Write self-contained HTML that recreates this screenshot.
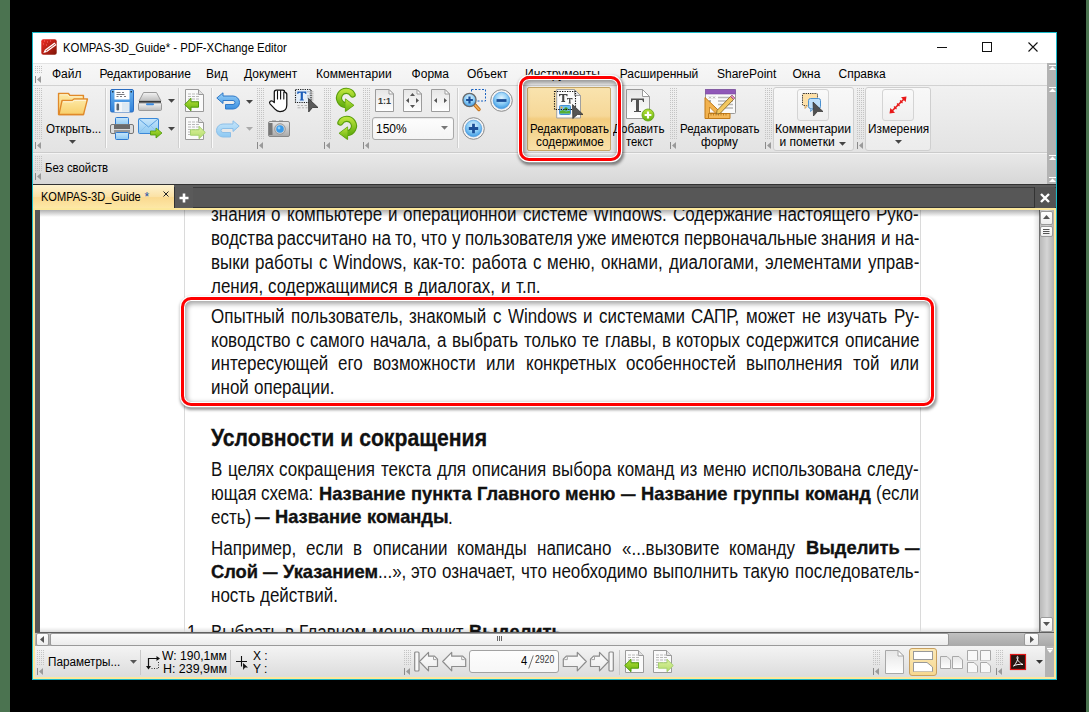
<!DOCTYPE html>
<html><head><meta charset="utf-8"><style>
html,body{margin:0;padding:0}
body{width:1089px;height:712px;position:relative;overflow:hidden;background:#000;font-family:"Liberation Sans",sans-serif}
.r{position:absolute}
.clip{position:absolute;overflow:hidden}
.t{position:absolute;white-space:nowrap;transform-origin:0 0}
.jl{position:absolute;display:flex;justify-content:space-between;white-space:nowrap;transform-origin:0 0;line-height:1.149;color:#111}
.jl.nj{display:block}
.w{position:absolute;white-space:nowrap;transform-origin:0 0;line-height:1.149;color:#111}
.b{font-weight:bold;-webkit-text-stroke:0.35px #111}
svg{position:absolute;overflow:visible}
</style></head><body>
<svg width="0" height="0" style="position:absolute"><defs>
<linearGradient id="gFold" x1="0" y1="0" x2="0" y2="1"><stop offset="0" stop-color="#fde9a6"/><stop offset="1" stop-color="#f8cf6a"/></linearGradient>
<linearGradient id="gBlue" x1="0" y1="0" x2="0" y2="1"><stop offset="0" stop-color="#6bb4f0"/><stop offset="1" stop-color="#2f80d8"/></linearGradient>
<linearGradient id="gUndo" x1="0" y1="0" x2="0" y2="1"><stop offset="0" stop-color="#9ad2f8"/><stop offset="1" stop-color="#3c90e2"/></linearGradient>
<linearGradient id="gLBlue" x1="0" y1="0" x2="0" y2="1"><stop offset="0" stop-color="#c7e6fb"/><stop offset="1" stop-color="#8cc8f2"/></linearGradient>
<linearGradient id="gGray" x1="0" y1="0" x2="0" y2="1"><stop offset="0" stop-color="#e8e8e8"/><stop offset="1" stop-color="#a8a8a8"/></linearGradient>
<linearGradient id="gGreen" x1="0" y1="0" x2="0" y2="1"><stop offset="0" stop-color="#b8e23a"/><stop offset="1" stop-color="#66b010"/></linearGradient>
<linearGradient id="gLGreen" x1="0" y1="0" x2="0" y2="1"><stop offset="0" stop-color="#def2a0"/><stop offset="1" stop-color="#b2dc6a"/></linearGradient>
<linearGradient id="gPage" x1="0" y1="0" x2="0" y2="1"><stop offset="0" stop-color="#e6e6e6"/><stop offset="1" stop-color="#ffffff"/></linearGradient>
<linearGradient id="gBtn" x1="0" y1="0" x2="0" y2="1"><stop offset="0" stop-color="#ffffff"/><stop offset="1" stop-color="#ececec"/></linearGradient>
<radialGradient id="gCirc" cx="0.5" cy="0.35" r="0.6"><stop offset="0" stop-color="#e4f4fe"/><stop offset="0.6" stop-color="#8ccdf6"/><stop offset="1" stop-color="#4aa2e6"/></radialGradient>
<linearGradient id="gRed" x1="0" y1="0" x2="1" y2="1"><stop offset="0" stop-color="#f02a22"/><stop offset="1" stop-color="#7e1608"/></linearGradient>
<pattern id="pGrip" width="2" height="2" patternUnits="userSpaceOnUse"><rect width="1" height="1" fill="#c4c4c4"/></pattern>
</defs></svg>
<div class="r" style="left:0px;top:0px;width:10px;height:712px;background:#4b7350"></div>
<div class="r" style="left:1086px;top:0px;width:3px;height:712px;background:#4b7350"></div>
<div class="r" style="left:32px;top:32px;width:1025px;height:648px;background:#18b9c9"></div>
<div class="r" style="left:33px;top:33px;width:1023px;height:30px;background:#fff"></div>
<svg style="left:41px;top:39px" width="16" height="16" viewBox="0 0 16 16" ><rect x="0.3" y="0.3" width="15.4" height="15.4" rx="2" fill="url(#gRed)"/>
<path d="M4 10.5 L13.5 3.5 L15.5 6 L6 13 Z" fill="#fff"/>
<path d="M5 11.8 L14.5 4.8" stroke="#c23a2a" stroke-width="0.9"/>
<path d="M2.3 14 L4 10.5 L6 13 Z" fill="#fff"/>
<path d="M3 2h1M6 3h1M9 2h1M2 5h1M5 6h1" stroke="#ff8080" stroke-width="0.8"/></svg>
<div class="t" style="left:62.5px;top:42.14px;font-size:12px;line-height:13.79px;color:#000;transform:scaleX(0.9460);">KOMPAS-3D_Guide* - PDF-XChange Editor</div>
<div class="r" style="left:937px;top:47px;width:10px;height:1px;background:#111"></div>
<div class="r" style="left:982px;top:42px;width:10px;height:10px;border:1px solid #111;box-sizing:border-box"></div>
<svg style="left:1028px;top:42px" width="10" height="10" viewBox="0 0 10 10" ><path d="M0.5 0.5 L9.5 9.5 M9.5 0.5 L0.5 9.5" stroke="#111" stroke-width="1.1"/></svg>
<div class="r" style="left:33px;top:63px;width:1014px;height:22px;background:linear-gradient(#f7f7f7,#f2f2f2);border-top:1px solid #e3e3e3;box-sizing:border-box"></div>
<div class="r" style="left:33px;top:85px;width:1014px;height:1px;background:#d2d2d2"></div>
<svg style="left:35px;top:66px" width="8" height="8" viewBox="0 0 8 8" ><rect x="0" y="0" width="8" height="8" fill="url(#pGrip)"/></svg>
<svg style="left:35px;top:76px" width="7" height="7" viewBox="0 0 7 7" ><rect x="0" y="0" width="1" height="7" fill="#8a8a8a"/><path d="M6 0 L2 3.5 L6 7 Z" fill="#9a9a9a"/></svg>
<div class="t" style="left:52px;top:68.14px;font-size:12px;line-height:13.79px;color:#000;">Файл</div>
<div class="t" style="left:99.4px;top:68.14px;font-size:12px;line-height:13.79px;color:#000;">Редактирование</div>
<div class="t" style="left:206px;top:68.14px;font-size:12px;line-height:13.79px;color:#000;">Вид</div>
<div class="t" style="left:244px;top:68.14px;font-size:12px;line-height:13.79px;color:#000;">Документ</div>
<div class="t" style="left:316px;top:68.14px;font-size:12px;line-height:13.79px;color:#000;">Комментарии</div>
<div class="t" style="left:411.6px;top:68.14px;font-size:12px;line-height:13.79px;color:#000;">Форма</div>
<div class="t" style="left:467px;top:68.14px;font-size:12px;line-height:13.79px;color:#000;">Объект</div>
<div class="t" style="left:525px;top:68.14px;font-size:12px;line-height:13.79px;color:#000;">Инструменты</div>
<div class="t" style="left:619.7px;top:68.14px;font-size:12px;line-height:13.79px;color:#000;">Расширенный</div>
<div class="t" style="left:717px;top:68.14px;font-size:12px;line-height:13.79px;color:#000;">SharePoint</div>
<div class="t" style="left:792.5px;top:68.14px;font-size:12px;line-height:13.79px;color:#000;">Окна</div>
<div class="t" style="left:838.5px;top:68.14px;font-size:12px;line-height:13.79px;color:#000;">Справка</div>
<div class="r" style="left:33px;top:86px;width:1014px;height:66px;background:linear-gradient(#f1f1f1,#e3e3e3)"></div>
<div class="r" style="left:33px;top:152px;width:1014px;height:1px;background:#cbcbcb"></div>
<div class="r" style="left:33px;top:153px;width:1014px;height:1px;background:#f4f4f4"></div>
<div class="r" style="left:33px;top:154px;width:1014px;height:30px;background:linear-gradient(#e8e8e8,#d7d7d7)"></div>
<svg style="left:35px;top:156px" width="8" height="16" viewBox="0 0 8 16" ><rect x="0" y="0" width="8" height="16" fill="url(#pGrip)"/></svg>
<svg style="left:35px;top:173px" width="7" height="7" viewBox="0 0 7 7" ><rect x="0" y="0" width="1" height="7" fill="#8a8a8a"/><path d="M6 0 L2 3.5 L6 7 Z" fill="#9a9a9a"/></svg>
<div class="t" style="left:45.3px;top:161.64px;font-size:12px;line-height:13.79px;color:#000;transform:scaleX(0.9478);">Без свойств</div>
<div class="r" style="left:1047px;top:63px;width:9px;height:121px;background:#b3b3b3"></div>
<svg style="left:1049px;top:65px" width="7" height="5" viewBox="0 0 7 5" ><rect x="0" y="0" width="7" height="1" fill="#fff"/><path d="M0 5 L3.5 1.5 L7 5 Z" fill="#fff"/></svg>
<svg style="left:1049px;top:87px" width="7" height="5" viewBox="0 0 7 5" ><rect x="0" y="0" width="7" height="1" fill="#fff"/><path d="M0 5 L3.5 1.5 L7 5 Z" fill="#fff"/></svg>
<svg style="left:1049px;top:155px" width="7" height="5" viewBox="0 0 7 5" ><rect x="0" y="0" width="7" height="1" fill="#fff"/><path d="M0 5 L3.5 1.5 L7 5 Z" fill="#fff"/></svg>
<svg style="left:1049px;top:177px" width="7" height="5" viewBox="0 0 7 5" ><rect x="0" y="0" width="7" height="1" fill="#fff"/><path d="M0 5 L3.5 1.5 L7 5 Z" fill="#fff"/></svg>
<svg style="left:35px;top:88px" width="8" height="52" viewBox="0 0 8 52" ><rect x="0" y="0" width="8" height="52" fill="url(#pGrip)"/></svg>
<svg style="left:35px;top:142px" width="7" height="7" viewBox="0 0 7 7" ><rect x="0" y="0" width="1" height="7" fill="#8a8a8a"/><path d="M6 0 L2 3.5 L6 7 Z" fill="#9a9a9a"/></svg>
<svg style="left:57px;top:92px" width="32" height="24" viewBox="0 0 32 24" ><path d="M1.5 1.5 H11.5 L13 3.5 H26.5 V22.5 H1.5 Z" fill="url(#gFold)" stroke="#e0892a" stroke-width="1.3" stroke-linejoin="round"/>
<path d="M2.8 2.8 H10.8 L12.3 4.8 H25.2" fill="none" stroke="#fff6d0" stroke-width="1"/>
<path d="M2 22.5 L5 8.5 H15 L17 7 H30.5 L26.5 22.5 Z" fill="url(#gFold)" stroke="#e0892a" stroke-width="1.3" stroke-linejoin="round"/>
<path d="M6 9.8 H15.5 L17.5 8.3 H29" fill="none" stroke="#fff8e0" stroke-width="1"/></svg>
<div class="t" style="left:45.5px;top:122.64px;font-size:12px;line-height:13.79px;color:#000;transform:scaleX(0.9684);">Открыть...</div>
<svg style="left:69px;top:140px" width="7" height="4" viewBox="0 0 7 4" ><path d="M0 0 H7 L3.5 3.8 Z" fill="#444"/></svg>
<div class="r" style="left:105px;top:88px;width:1px;height:60px;background:#cfcfcf"></div>
<div class="r" style="left:106px;top:88px;width:1px;height:60px;background:#fafafa"></div>
<svg style="left:110px;top:89px" width="24" height="23" viewBox="0 0 24 23" ><rect x="0.5" y="0.5" width="23" height="22.5" rx="1.5" fill="url(#gBlue)" stroke="#2a6cc0"/>
<rect x="2" y="2" width="1.5" height="1.5" fill="#234"/><rect x="20.5" y="2" width="1.5" height="1.5" fill="#234"/>
<rect x="4.5" y="1" width="15" height="9.5" fill="#fff"/>
<path d="M6.5 3.5h4M12 3.5h2M6.5 5.5h8M6.5 7.5h2M10 7.5h2M14 7.5h2" stroke="#7a7a80" stroke-width="1"/>
<rect x="4.5" y="13" width="15" height="10" fill="#f2f5f8"/>
<rect x="12" y="13.5" width="7" height="9" fill="#dce8f2"/>
<rect x="6.5" y="14.5" width="2.6" height="7" rx="1.2" fill="#5a6470"/></svg>
<svg style="left:138px;top:91px" width="24" height="20" viewBox="0 0 24 20" ><linearGradient id="gLid" x1="0" y1="0" x2="0" y2="1"><stop offset="0" stop-color="#f4f4f4"/><stop offset="1" stop-color="#bcbcbc"/></linearGradient>
<path d="M5.5 1.5 H18.5 L23 10 H1 Z" fill="url(#gLid)" stroke="#9a9a9a" stroke-width="1" stroke-linejoin="round"/>
<rect x="1" y="10" width="22" height="2.2" fill="#3a3a3a"/>
<rect x="0.5" y="12" width="23" height="7.5" rx="1.2" fill="url(#gLid)" stroke="#9a9a9a"/>
<rect x="8" y="12.2" width="8" height="2" rx="1" fill="#3a8ae0"/></svg>
<svg style="left:168px;top:99px" width="7" height="4" viewBox="0 0 7 4" ><path d="M0 0 H7 L3.5 3.8 Z" fill="#444"/></svg>
<svg style="left:110px;top:117px" width="24" height="23" viewBox="0 0 24 23" ><rect x="5.5" y="0.5" width="13" height="8" rx="1" fill="url(#gLBlue)" stroke="#2f7ad0"/>
<rect x="0.5" y="7.5" width="23" height="9" rx="1.5" fill="#dcdcdc" stroke="#777"/>
<rect x="4" y="8" width="16" height="4" fill="#6a6a6a"/>
<rect x="4" y="13" width="16" height="3" fill="#999"/>
<rect x="5.5" y="15.5" width="13" height="7" rx="1" fill="url(#gLBlue)" stroke="#2f7ad0"/></svg>
<svg style="left:138px;top:118px" width="25" height="21" viewBox="0 0 25 21" ><rect x="0.5" y="0.5" width="20" height="15" rx="1" fill="url(#gLBlue)" stroke="#3a88d8"/>
<path d="M1 1 L10.5 9 L20 1" fill="none" stroke="#5aa0e0" stroke-width="1"/>
<path d="M1 15 L8 8 M20 15 L13 8" stroke="#8cc0ea" stroke-width="0.8"/>
<path d="M12.5 13 H18 V10 L24 15 L18 20 V17 H12.5 Z" fill="url(#gGreen)" stroke="#4e9a0a" stroke-width="0.8" stroke-linejoin="round"/></svg>
<svg style="left:168px;top:127px" width="7" height="4" viewBox="0 0 7 4" ><path d="M0 0 H7 L3.5 3.8 Z" fill="#444"/></svg>
<div class="r" style="left:178px;top:88px;width:1px;height:60px;background:#cfcfcf"></div>
<div class="r" style="left:179px;top:88px;width:1px;height:60px;background:#fafafa"></div>
<svg style="left:184px;top:89px" width="21" height="23" viewBox="0 0 21 23" ><g transform="translate(1,0)"><path d="M0.5 0.5 H13.5 L18.5 5.5 V22.5 H0.5 Z" fill="#fafafa" stroke="#9a9a9a"/>
<path d="M13.5 0.5 V5.5 H18.5" fill="#e0e0e0" stroke="#9a9a9a"/><path d="M3 5 H15" stroke="#b8b8b8" stroke-width="1" stroke-dasharray="3 1"/><path d="M3 7.5 H15" stroke="#b8b8b8" stroke-width="1" stroke-dasharray="3 1"/><path d="M3 10 H15" stroke="#b8b8b8" stroke-width="1" stroke-dasharray="3 1"/><path d="M3 12.5 H15" stroke="#b8b8b8" stroke-width="1" stroke-dasharray="3 1"/><path d="M3 15 H15" stroke="#b8b8b8" stroke-width="1" stroke-dasharray="3 1"/><path d="M3 17.5 H15" stroke="#b8b8b8" stroke-width="1" stroke-dasharray="3 1"/></g><path d="M0.7 15.5 L7 9.3 V12.8 H14.5 V18.2 H7 V21.7 Z" fill="url(#gGreen)" stroke="#4e9a0a" stroke-width="1" stroke-linejoin="round"/></svg>
<svg style="left:185px;top:117px" width="21" height="23" viewBox="0 0 21 23" ><path d="M0.5 0.5 H13.5 L18.5 5.5 V22.5 H0.5 Z" fill="#fafafa" stroke="#9a9a9a"/>
<path d="M13.5 0.5 V5.5 H18.5" fill="#e0e0e0" stroke="#9a9a9a"/><path d="M3 5 H15" stroke="#b8b8b8" stroke-width="1" stroke-dasharray="3 1"/><path d="M3 7.5 H15" stroke="#b8b8b8" stroke-width="1" stroke-dasharray="3 1"/><path d="M3 10 H15" stroke="#b8b8b8" stroke-width="1" stroke-dasharray="3 1"/><path d="M3 12.5 H15" stroke="#b8b8b8" stroke-width="1" stroke-dasharray="3 1"/><path d="M3 15 H15" stroke="#b8b8b8" stroke-width="1" stroke-dasharray="3 1"/><path d="M3 17.5 H15" stroke="#b8b8b8" stroke-width="1" stroke-dasharray="3 1"/><path d="M20.3 15.5 L14 9.3 V12.8 H5.5 V18.2 H14 V21.7 Z" fill="url(#gLGreen)" stroke="#a6d070" stroke-width="1" stroke-linejoin="round"/></svg>
<div class="r" style="left:211px;top:88px;width:1px;height:60px;background:#cfcfcf"></div>
<div class="r" style="left:212px;top:88px;width:1px;height:60px;background:#fafafa"></div>
<svg style="left:216px;top:92px" width="24" height="18" viewBox="0 0 24 18" ><path d="M0.8 6 L7 0.8 V4 H17 A6.5 6.5 0 0 1 17 17 H9.5 V12.5 H17 A2 2 0 0 0 17 8.5 H7 V11.5 Z" fill="url(#gUndo)" stroke="#2f78c8" stroke-width="1" stroke-linejoin="round"/></svg>
<svg style="left:246px;top:100px" width="7" height="4" viewBox="0 0 7 4" ><path d="M0 0 H7 L3.5 3.8 Z" fill="#444"/></svg>
<svg style="left:216px;top:120px" width="24" height="18" viewBox="0 0 24 18" ><path d="M23.2 6 L17 0.8 V4 H7 A6.5 6.5 0 0 0 7 17 H14.5 V12.5 H7 A2 2 0 0 1 7 8.5 H17 V11.5 Z" fill="url(#gLBlue)" stroke="#8cbfe8" stroke-width="1" stroke-linejoin="round"/></svg>
<svg style="left:246px;top:127px" width="7" height="4" viewBox="0 0 7 4" ><path d="M0 0 H7 L3.5 3.8 Z" fill="#aaa"/></svg>
<svg style="left:257px;top:88px" width="8" height="52" viewBox="0 0 8 52" ><rect x="0" y="0" width="8" height="52" fill="url(#pGrip)"/></svg>
<svg style="left:257px;top:142px" width="7" height="7" viewBox="0 0 7 7" ><rect x="0" y="0" width="1" height="7" fill="#8a8a8a"/><path d="M6 0 L2 3.5 L6 7 Z" fill="#9a9a9a"/></svg>
<svg style="left:268px;top:88px" width="20" height="25" viewBox="0 0 20 25" ><path d="M6.3 14.5 V4.2 Q6.3 2 8.3 2 H14.8 Q16.8 2 16.8 4.3 Q18.8 4.3 18.8 6.5 V17 Q18.8 23.5 12 23.5 Q9 23.5 7 21.2 L2 15.8 Q0.9 14.3 2.3 13.2 Q4 12.2 6.3 14.5 Z" fill="#fff" stroke="#111" stroke-width="1.25" stroke-linejoin="round"/>
<path d="M9.5 3 V11 M12.6 2.5 V11 M15.8 4 V11" stroke="#111" stroke-width="1.1" stroke-linecap="round"/></svg>
<svg style="left:295px;top:89px" width="24" height="24" viewBox="0 0 24 24" ><path d="M2.5 16.5h2M6 16.5h2M9.5 16.5h2.5M2.5 18.8h3M7 18.8h2M10.5 18.8h2" stroke="#a8a8a8" stroke-width="0.9"/>
<rect x="0.5" y="0.5" width="15.5" height="13" fill="#e4eef8"/>
<path d="M12 2.8h6.5M14 4.8h4.5M12 6.9h6.5M12 9h6.5M14 11h4.5" stroke="#a8a8a8" stroke-width="0.9"/>
<rect x="0.5" y="0.5" width="15.5" height="13" fill="none" stroke="#1a1a1a" stroke-width="1.1" stroke-dasharray="1.2 1.1"/><path d="M2.3 2.6 H11.3 V5.120000000000001 H10.5 C10.5 3.8600000000000003 9.05 3.68 7.88 3.68 V10.52 H8.78 V11.6 H4.82 V10.52 H5.72 V3.68 C4.55 3.68 3.0999999999999996 3.8600000000000003 3.0999999999999996 5.120000000000001 H2.3 Z" fill="#1a5cb8"/><path d="M13.5 9.5 L23 18.5 H17.5 L13.7 23 Z" fill="#5a5a5a" stroke="#222" stroke-width="0.7" stroke-linejoin="round"/></svg>
<svg style="left:268px;top:120px" width="22" height="17" viewBox="0 0 22 17" ><rect x="4" y="0" width="4" height="2" fill="#bbb"/><rect x="11" y="0" width="4" height="2" fill="#bbb"/>
<rect x="0.5" y="1.5" width="21" height="15" rx="1.5" fill="url(#gGray)" stroke="#888"/>
<rect x="1" y="3" width="3.5" height="12" fill="#777"/>
<circle cx="12" cy="9" r="5.3" fill="#d0d0d0" stroke="#999"/>
<circle cx="12" cy="9" r="3.8" fill="#3a9ae8"/>
<circle cx="11" cy="8" r="1.4" fill="#8cd0ff"/></svg>
<svg style="left:324px;top:88px" width="8" height="52" viewBox="0 0 8 52" ><rect x="0" y="0" width="8" height="52" fill="url(#pGrip)"/></svg>
<svg style="left:324px;top:142px" width="7" height="7" viewBox="0 0 7 7" ><rect x="0" y="0" width="1" height="7" fill="#8a8a8a"/><path d="M6 0 L2 3.5 L6 7 Z" fill="#9a9a9a"/></svg>
<svg style="left:336px;top:88px" width="21" height="24" viewBox="0 0 21 24" ><path d="M16.6 6.6 A7.2 7.2 0 1 0 10 17.2" fill="none" stroke="#5a9e0c" stroke-width="6.2" stroke-linecap="round"/><path d="M9.5 11.2 L17.5 17.2 L9.5 23.2 Z" fill="#5a9e0c" stroke="#5a9e0c" stroke-width="1.2" stroke-linejoin="round"/><path d="M16.6 6.6 A7.2 7.2 0 1 0 10 17.2" fill="none" stroke="url(#gGreen)" stroke-width="4" stroke-linecap="round"/><path d="M9.5 11.2 L17.5 17.2 L9.5 23.2 Z" fill="url(#gGreen)"/></svg>
<svg style="left:336px;top:116px" width="21" height="24" viewBox="0 0 21 24" ><g transform="translate(21,0) scale(-1,1)"><path d="M16.6 6.6 A7.2 7.2 0 1 0 10 17.2" fill="none" stroke="#5a9e0c" stroke-width="6.2" stroke-linecap="round"/><path d="M9.5 11.2 L17.5 17.2 L9.5 23.2 Z" fill="#5a9e0c" stroke="#5a9e0c" stroke-width="1.2" stroke-linejoin="round"/><path d="M16.6 6.6 A7.2 7.2 0 1 0 10 17.2" fill="none" stroke="url(#gGreen)" stroke-width="4" stroke-linecap="round"/><path d="M9.5 11.2 L17.5 17.2 L9.5 23.2 Z" fill="url(#gGreen)"/></g></svg>
<svg style="left:363px;top:88px" width="8" height="52" viewBox="0 0 8 52" ><rect x="0" y="0" width="8" height="52" fill="url(#pGrip)"/></svg>
<svg style="left:363px;top:142px" width="7" height="7" viewBox="0 0 7 7" ><rect x="0" y="0" width="1" height="7" fill="#8a8a8a"/><path d="M6 0 L2 3.5 L6 7 Z" fill="#9a9a9a"/></svg>
<svg style="left:375px;top:89px" width="19" height="23" viewBox="0 0 19 23" ><path d="M0.5 0.5 H14 L18.5 5 V22.5 H0.5 Z" fill="url(#gPage)" stroke="#9c9c9c"/>
<path d="M14 0.5 V5 H18.5 Z" fill="#fff" stroke="#9c9c9c" stroke-linejoin="round"/><text x="9.5" y="15" font-family="Liberation Sans" font-size="9" font-weight="bold" text-anchor="middle" fill="#3a3a3a">1:1</text></svg>
<svg style="left:403px;top:89px" width="19" height="23" viewBox="0 0 19 23" ><path d="M0.5 0.5 H14 L18.5 5 V22.5 H0.5 Z" fill="url(#gPage)" stroke="#9c9c9c"/>
<path d="M14 0.5 V5 H18.5 Z" fill="#fff" stroke="#9c9c9c" stroke-linejoin="round"/><path d="M9.5 4 L12 7 H7 Z M9.5 19 L12 16 H7 Z M3 11.5 L6 9 V14 Z M16 11.5 L13 9 V14 Z" fill="#555"/></svg>
<svg style="left:431px;top:89px" width="19" height="23" viewBox="0 0 19 23" ><path d="M0.5 0.5 H14 L18.5 5 V22.5 H0.5 Z" fill="url(#gPage)" stroke="#9c9c9c"/>
<path d="M14 0.5 V5 H18.5 Z" fill="#fff" stroke="#9c9c9c" stroke-linejoin="round"/><path d="M3 11.5 L6 9 V14 Z M16 11.5 L13 9 V14 Z" fill="#555"/></svg>
<div class="r" style="left:372px;top:117px;width:82px;height:23px;background:linear-gradient(#fdfdfd,#f4f4f4);border:1px solid #a9a9a9;border-radius:3px;box-sizing:border-box;box-shadow:inset 0 1px 1px rgba(0,0,0,.08)"></div>
<div class="t" style="left:376px;top:123.14px;font-size:12px;line-height:13.79px;color:#000;">150%</div>
<svg style="left:441px;top:126px" width="7" height="4" viewBox="0 0 7 4" ><path d="M0 0 H7 L3.5 3.8 Z" fill="#777"/></svg>
<div class="r" style="left:457px;top:88px;width:1px;height:60px;background:#cfcfcf"></div>
<div class="r" style="left:458px;top:88px;width:1px;height:60px;background:#fafafa"></div>
<svg style="left:462px;top:89px" width="24" height="23" viewBox="0 0 24 23" ><rect x="9.5" y="0.5" width="14" height="11.5" fill="none" stroke="#1a62c0" stroke-width="1" stroke-dasharray="2 1.5"/>
<path d="M12 15 L17 20.5" stroke="#c06a10" stroke-width="3.4" stroke-linecap="round"/>
<path d="M12 15 L17 20.5" stroke="#f4b05a" stroke-width="1.8" stroke-linecap="round"/>
<circle cx="7.5" cy="11" r="6.6" fill="url(#gCirc)" stroke="#6a6a6a" stroke-width="1.3"/>
<path d="M7.5 7.6 V14.4 M4.1 11 H10.9" stroke="#1a4f98" stroke-width="2.2"/></svg>
<svg style="left:490px;top:89px" width="23" height="23" viewBox="0 0 23 23" ><circle cx="11.5" cy="11.5" r="10.8" fill="#f4f4f4" stroke="#8a8a8a" stroke-width="1"/>
<circle cx="11.5" cy="11.5" r="8.3" fill="url(#gCirc)" stroke="#3f8fd8" stroke-width="0.6"/><path d="M6.5 11.5 H16.5" stroke="#1b4f98" stroke-width="2.8"/></svg>
<svg style="left:462px;top:117px" width="23" height="23" viewBox="0 0 23 23" ><circle cx="11.5" cy="11.5" r="10.8" fill="#f4f4f4" stroke="#8a8a8a" stroke-width="1"/>
<circle cx="11.5" cy="11.5" r="8.3" fill="url(#gCirc)" stroke="#3f8fd8" stroke-width="0.6"/><path d="M11.5 6.8 V16.2 M6.8 11.5 H16.2" stroke="#1b4f98" stroke-width="2.8"/></svg>
<div class="r" style="left:527px;top:87px;width:84px;height:64px;background:linear-gradient(#f9e3ae,#f6d898 45%,#f3cd80 50%,#f8e0a8);border:1px solid #c8a868;border-radius:2px;box-sizing:border-box"></div>
<svg style="left:553px;top:88px" width="31" height="32" viewBox="0 0 31 32" ><path d="M3.7 1.5 H21.5 L27.5 7.5 V30 H3.7 Z" fill="#fbfbfb" stroke="#a0a0a0"/>
<path d="M21.5 1.5 V7.5 H27.5 Z" fill="#e6e6e6" stroke="#a0a0a0" stroke-linejoin="round"/><path d="M6 6 H14.5 V8.24 H13.7 C13.7 7.12 12.375 6.96 11.27 6.96 V13.04 H12.120000000000001 V14 H8.38 V13.04 H9.23 V6.96 C8.125 6.96 6.8 7.12 6.8 8.24 H6 Z" fill="#444"/><path d="M14 10 H19.5 V11.54 H18.7 C18.7 10.77 18.125 10.66 17.41 10.66 V14.84 H17.96 V15.5 H15.54 V14.84 H16.09 V10.66 C15.375 10.66 14.8 10.77 14.8 11.54 H14 Z" fill="#444"/><rect x="6.5" y="17.5" width="11" height="9" rx="1" fill="#6cc0f0" stroke="#3a88d0" stroke-width="0.9"/>
<path d="M7 25.5 V23 L10 22 L13 23.5 L17 22.5 V25.5 Z" fill="#58b030"/>
<circle cx="13" cy="21" r="1.8" fill="#4a9a20"/><rect x="7.5" y="18.5" width="2" height="2" fill="#f0a040"/>
<rect x="1.5" y="3.5" width="21" height="18" fill="none" stroke="#111" stroke-width="1.1" stroke-dasharray="1.3 1.2"/>
<path d="M19.5 16.5 L30 26.5 H24.5 L19.8 30.5 Z" fill="#555" stroke="#2a2a2a" stroke-width="0.7" stroke-linejoin="round"/></svg>
<div class="t" style="left:529.5px;top:122.64px;font-size:12px;line-height:13.79px;color:#000;transform:scaleX(0.9530);">Редактировать</div>
<div class="t" style="left:535.8px;top:135.64px;font-size:12px;line-height:13.79px;color:#000;transform:scaleX(0.9800);">содержимое</div>
<svg style="left:626px;top:89px" width="29" height="33" viewBox="0 0 29 33" ><path d="M0.5 0.5 H16.5 L23.5 7.5 V29.5 H0.5 Z" fill="url(#gPage)" stroke="#9a9a9a"/>
<path d="M16.5 0.5 V7.5 H23.5 Z" fill="#fff" stroke="#9a9a9a" stroke-linejoin="round"/>
<path d="M5 9.5 H18 V13 H17 C17 11.5 16.5 11 15 11 H13 V22 H15 V23 H8 V22 H10 V11 H8 C6.5 11 6 11.5 6 13 H5 Z" fill="#505050"/>
<circle cx="22" cy="26" r="6" fill="url(#gGreen)" stroke="#5a9e0c" stroke-width="0.8"/>
<path d="M22 22.6 V29.4 M18.6 26 H25.4" stroke="#fff" stroke-width="2.2"/></svg>
<div class="t" style="left:613.0px;top:122.64px;font-size:12px;line-height:13.79px;color:#000;transform:scaleX(0.9717);">Добавить</div>
<div class="t" style="left:625.5px;top:135.64px;font-size:12px;line-height:13.79px;color:#000;transform:scaleX(0.9414);">текст</div>
<svg style="left:670px;top:88px" width="8" height="52" viewBox="0 0 8 52" ><rect x="0" y="0" width="8" height="52" fill="url(#pGrip)"/></svg>
<svg style="left:670px;top:142px" width="7" height="7" viewBox="0 0 7 7" ><rect x="0" y="0" width="1" height="7" fill="#8a8a8a"/><path d="M6 0 L2 3.5 L6 7 Z" fill="#9a9a9a"/></svg>
<svg style="left:704px;top:88px" width="32" height="32" viewBox="0 0 32 32" ><rect x="1.5" y="1.5" width="30" height="24" rx="1" fill="#fafafa" stroke="#9a9a9a"/>
<rect x="1.5" y="1.5" width="30" height="4.5" fill="#9058b8" stroke="#7a4aa0" stroke-width="0.6"/>
<path d="M5 8.5l2 2M7 8.5l-2 2M9 8.5l2 2M11 8.5l-2 2M5 12l2 2M7 12l-2 2" stroke="#999" stroke-width="0.8"/>
<path d="M14 9.5h15M14 13h15M14 16.5h15M17 20h12" stroke="#b8b8b8" stroke-width="1.4"/>
<path d="M1 30.5 V9.5 L23 30.5 Z" fill="#f2b24e" stroke="#c07a18" stroke-width="1"/>
<path d="M5.5 25 V19 L11.5 25 Z" fill="#fafafa" stroke="#c07a18" stroke-width="0.8"/>
<path d="M4.5 25.5 H26 V30.5 H4.5 Z" fill="#f4b858" stroke="#c07a18" stroke-width="1"/>
<path d="M7 25.5v2M9.5 25.5v2M12 25.5v2M14.5 25.5v2M17 25.5v2M19.5 25.5v2M22 25.5v2" stroke="#a86810" stroke-width="0.7"/>
<path d="M13 22.5 L26.5 8.5 L29.5 11.5 L16 25.5 L12.5 26 Z" fill="#f3c860" stroke="#8a6a2a" stroke-width="0.9" stroke-linejoin="round"/>
<path d="M26.5 8.5 L29.5 11.5 L31 10 L28 7 Z" fill="#e08ab8" stroke="#8a4a6a" stroke-width="0.6"/></svg>
<div class="t" style="left:680.0px;top:122.64px;font-size:12px;line-height:13.79px;color:#000;transform:scaleX(0.9602);">Редактировать</div>
<div class="t" style="left:701.0px;top:135.64px;font-size:12px;line-height:13.79px;color:#000;transform:scaleX(0.9842);">форму</div>
<svg style="left:765px;top:88px" width="8" height="52" viewBox="0 0 8 52" ><rect x="0" y="0" width="8" height="52" fill="url(#pGrip)"/></svg>
<svg style="left:765px;top:142px" width="7" height="7" viewBox="0 0 7 7" ><rect x="0" y="0" width="1" height="7" fill="#8a8a8a"/><path d="M6 0 L2 3.5 L6 7 Z" fill="#9a9a9a"/></svg>
<div class="r" style="left:773px;top:87px;width:81px;height:64px;background:linear-gradient(#f8f8f8,#ececec);border:1px solid #cfcfcf;border-radius:3px;box-sizing:border-box"></div>
<div class="r" style="left:797px;top:89px;width:32px;height:32px;background:linear-gradient(#fafafa,#efefef);border:1px solid #d4d4d4;border-radius:3px;box-sizing:border-box"></div>
<svg style="left:802px;top:93px" width="22" height="24" viewBox="0 0 22 24" ><rect x="0.5" y="0.5" width="15" height="12" rx="1" fill="#fde0a8" stroke="#222" stroke-dasharray="1.2 1"/>
<path d="M3 12.5 L3 15.5 L6 12.5" fill="#fde0a8" stroke="#c89040" stroke-width="0.7"/>
<rect x="6.5" y="5.5" width="12" height="10" rx="2" fill="#bfe0fa" stroke="#4a90d0"/>
<path d="M9 15.5 L8.5 18.5 L12 15.5" fill="#bfe0fa" stroke="#4a90d0" stroke-width="0.8"/>
<path d="M11 9 L21 18.5 H15.5 L11.5 23 Z" fill="#505050" stroke="#222" stroke-width="0.6" stroke-linejoin="round"/></svg>
<div class="t" style="left:775.0px;top:122.64px;font-size:12px;line-height:13.79px;color:#000;transform:scaleX(1.0066);">Комментарии</div>
<div class="t" style="left:779.5px;top:135.64px;font-size:12px;line-height:13.79px;color:#000;">и пометки</div>
<svg style="left:839px;top:142px" width="7" height="4" viewBox="0 0 7 4" ><path d="M0 0 H7 L3.5 3.8 Z" fill="#444"/></svg>
<svg style="left:857px;top:88px" width="8" height="52" viewBox="0 0 8 52" ><rect x="0" y="0" width="8" height="52" fill="url(#pGrip)"/></svg>
<svg style="left:857px;top:142px" width="7" height="7" viewBox="0 0 7 7" ><rect x="0" y="0" width="1" height="7" fill="#8a8a8a"/><path d="M6 0 L2 3.5 L6 7 Z" fill="#9a9a9a"/></svg>
<div class="r" style="left:865px;top:87px;width:66px;height:64px;background:linear-gradient(#f8f8f8,#ececec);border:1px solid #cfcfcf;border-radius:3px;box-sizing:border-box"></div>
<div class="r" style="left:882px;top:89px;width:32px;height:32px;background:linear-gradient(#fafafa,#efefef);border:1px solid #d4d4d4;border-radius:3px;box-sizing:border-box"></div>
<svg style="left:889px;top:96px" width="18" height="18" viewBox="0 0 18 18" ><path d="M2.5 15.5 L15.5 2.5" stroke="#e81818" stroke-width="1.6"/>
<path d="M0.5 17.5 L1.3 12 L6 16.7 Z M17.5 0.5 L12 1.3 L16.7 6 Z" fill="#e81818"/>
<path d="M5 10.5 L7.5 13 M8 7.5 L10.5 10 M11 4.5 L13.5 7" stroke="#e81818" stroke-width="1.1"/></svg>
<div class="t" style="left:867.7px;top:122.64px;font-size:12px;line-height:13.79px;color:#000;transform:scaleX(0.9823);">Измерения</div>
<svg style="left:895px;top:140px" width="7" height="4" viewBox="0 0 7 4" ><path d="M0 0 H7 L3.5 3.8 Z" fill="#444"/></svg>
<div class="r" style="left:519px;top:76px;width:102px;height:85px;border:3.4px solid #ff0000;border-radius:10px;box-sizing:border-box;box-shadow:0 0 0 1.2px #fff,1px 2px 3px 1.5px rgba(0,0,0,.45),inset 0 0 0 1px #fff,inset 1px 2px 5px 2px rgba(0,0,0,.4)"></div>
<div class="r" style="left:33px;top:184px;width:1023px;height:24px;background:#575757"></div>
<div class="r" style="left:33px;top:184px;width:1023px;height:1px;background:#323232"></div>
<div class="r" style="left:33px;top:185px;width:1023px;height:2px;background:#5c5c5c"></div>
<div class="r" style="left:33px;top:187px;width:1023px;height:1px;background:#3c3c3c"></div>
<div class="r" style="left:33px;top:207px;width:1023px;height:1px;background:#363636"></div>
<div class="r" style="left:33px;top:185px;width:141px;height:23px;background:linear-gradient(#fdf2cf,#fbe2a6 50%,#fad990 55%,#fde8a6)"></div>
<div class="t" style="left:40.6px;top:190.54px;font-size:12px;line-height:13.79px;color:#000;transform:scaleX(0.9193);">KOMPAS-3D_Guide</div>
<div class="t" style="left:144.5px;top:190.54px;font-size:12px;line-height:13.79px;color:#1b4fa8;">*</div>
<svg style="left:163px;top:191px" width="6" height="6" viewBox="0 0 6 6" ><path d="M0.5 0.5 L5.5 5.5 M5.5 0.5 L0.5 5.5" stroke="#222" stroke-width="1"/></svg>
<div class="r" style="left:174px;top:187px;width:19px;height:21px;background:#5a5a5a;border-left:1px solid #333;box-sizing:border-box"></div>
<svg style="left:179px;top:193px" width="10" height="10" viewBox="0 0 10 10" ><path d="M5 0.5 V9.5 M0.5 5 H9.5" stroke="#fff" stroke-width="2.6"/></svg>
<div class="r" style="left:1034px;top:187px;width:21px;height:21px;background:#535353;border-left:1px solid #333;box-sizing:border-box"></div>
<svg style="left:1040px;top:193px" width="10" height="10" viewBox="0 0 10 10" ><path d="M1 1 L9 9 M9 1 L1 9" stroke="#fff" stroke-width="2.4"/></svg>
<div class="r" style="left:33px;top:208px;width:1023px;height:471px;background:#fce89c"></div>
<div class="r" style="left:35px;top:210px;width:1019px;height:422px;background:#fff"></div>
<div class="r" style="left:35px;top:210px;width:5px;height:422px;background:#575757"></div>
<div class="r" style="left:1033px;top:210px;width:7px;height:422px;background:linear-gradient(90deg,rgba(0,0,0,0),rgba(0,0,0,.12))"></div>
<div class="r" style="left:40px;top:627px;width:1000px;height:5px;background:linear-gradient(rgba(0,0,0,0),rgba(0,0,0,.12))"></div>
<div class="r" style="left:184px;top:210px;width:1px;height:422px;background:#dadada"></div>
<div class="r" style="left:920px;top:210px;width:1px;height:422px;background:#dadada"></div>
<div class="r" style="left:1039px;top:210px;width:15px;height:422px;background:linear-gradient(90deg,#b9b9b9,#d5d5d5 50%,#b0b0b0);border-left:1px solid #707070;box-sizing:border-box"></div>
<div class="r" style="left:1040px;top:211px;width:13px;height:14px;background:linear-gradient(#ffffff,#ececec);border:1px solid #9a9a9a;border-radius:2px;box-sizing:border-box"></div>
<svg style="left:1043px;top:215px" width="7" height="4" viewBox="0 0 7 4" ><path d="M0 4 L3.5 0 L7 4 Z" fill="#555"/></svg>
<div class="r" style="left:1040px;top:226px;width:13px;height:11px;background:linear-gradient(#ffffff,#ececec);border:1px solid #9a9a9a;border-radius:2px;box-sizing:border-box"></div>
<svg style="left:1043px;top:228px" width="7" height="7" viewBox="0 0 7 7" ><path d="M0 1.5 H6.5 M0 3.5 H6.5 M0 5.5 H6.5" stroke="#555" stroke-width="1"/></svg>
<div class="r" style="left:1040px;top:617px;width:13px;height:15px;background:linear-gradient(#ffffff,#ececec);border:1px solid #9a9a9a;border-radius:2px;box-sizing:border-box"></div>
<svg style="left:1043px;top:622px" width="7" height="4" viewBox="0 0 7 4" ><path d="M0 0 L3.5 4 L7 0 Z" fill="#555"/></svg>
<div class="r" style="left:35px;top:632px;width:1019px;height:14px;background:linear-gradient(#c2c2c2,#a9a9a9)"></div>
<div class="r" style="left:35px;top:632px;width:1019px;height:1px;background:#606060"></div>
<div class="r" style="left:36px;top:633px;width:13px;height:13px;background:linear-gradient(#ffffff,#ececec);border:1px solid #9a9a9a;border-radius:2px;box-sizing:border-box"></div>
<svg style="left:40px;top:636px" width="4" height="7" viewBox="0 0 4 7" ><path d="M4 0 L0 3.5 L4 7 Z" fill="#555"/></svg>
<div class="r" style="left:50px;top:633px;width:899px;height:13px;background:linear-gradient(#fbfbfb,#ececec);border:1px solid #9a9a9a;border-radius:2px;box-sizing:border-box"></div>
<svg style="left:497px;top:636px" width="6" height="5" viewBox="0 0 6 5" ><path d="M0.5 0 V5 M2.5 0 V5 M4.5 0 V5" stroke="#666" stroke-width="1"/></svg>
<div class="r" style="left:1024px;top:633px;width:15px;height:13px;background:linear-gradient(#ffffff,#ececec);border:1px solid #9a9a9a;border-radius:2px;box-sizing:border-box"></div>
<svg style="left:1030px;top:636px" width="4" height="7" viewBox="0 0 4 7" ><path d="M0 0 L4 3.5 L0 7 Z" fill="#555"/></svg>
<div class="r" style="left:35px;top:646px;width:1019px;height:31px;background:linear-gradient(#f4f4f4,#dcdcdc)"></div>
<svg style="left:37px;top:650px" width="8" height="16" viewBox="0 0 8 16" ><rect x="0" y="0" width="8" height="16" fill="url(#pGrip)"/></svg>
<svg style="left:37px;top:668px" width="7" height="7" viewBox="0 0 7 7" ><rect x="0" y="0" width="1" height="7" fill="#8a8a8a"/><path d="M6 0 L2 3.5 L6 7 Z" fill="#9a9a9a"/></svg>
<div class="t" style="left:47.5px;top:656.14px;font-size:12px;line-height:13.79px;color:#000;transform:scaleX(0.9757);">Параметры...</div>
<svg style="left:130px;top:660px" width="7" height="4" viewBox="0 0 7 4" ><path d="M0 0 H7 L3.5 3.8 Z" fill="#555"/></svg>
<div class="r" style="left:140px;top:650px;width:1px;height:25px;background:#c8c8c8"></div>
<svg style="left:145px;top:655px" width="16" height="16" viewBox="0 0 16 16" ><path d="M3.5 12 V3.5 H12" fill="none" stroke="#111" stroke-width="1.2"/><path d="M1 11 L3.5 14.5 L6 11 Z M11.5 1 L15 3.5 L11.5 6 Z" fill="#111"/><path d="M13.5 7v1M13.5 9.5v1M13.5 12v1M6.5 13.5h1M9 13.5h1M11.5 13.5h1" stroke="#333" stroke-width="1"/></svg>
<div class="t" style="left:162.0px;top:650.14px;font-size:12px;line-height:13.79px;color:#000;transform:scaleX(1.0094);">W: 190,1мм</div>
<div class="t" style="left:162.5px;top:662.64px;font-size:12px;line-height:13.79px;color:#000;transform:scaleX(1.0339);">H: 239,9мм</div>
<div class="r" style="left:230px;top:650px;width:1px;height:25px;background:#c8c8c8"></div>
<svg style="left:235px;top:655px" width="14" height="16" viewBox="0 0 14 16" ><path d="M1 6.5 H12 M6.5 1 V11.5" stroke="#111" stroke-width="1.1"/><path d="M8 8 L13 12.5 H10 L8.2 15 Z" fill="#111"/></svg>
<div class="t" style="left:253px;top:650.14px;font-size:12px;line-height:13.79px;color:#000;">X :</div>
<div class="t" style="left:253px;top:662.64px;font-size:12px;line-height:13.79px;color:#000;">Y :</div>
<svg style="left:404px;top:650px" width="8" height="16" viewBox="0 0 8 16" ><rect x="0" y="0" width="8" height="16" fill="url(#pGrip)"/></svg>
<svg style="left:404px;top:668px" width="7" height="7" viewBox="0 0 7 7" ><rect x="0" y="0" width="1" height="7" fill="#8a8a8a"/><path d="M6 0 L2 3.5 L6 7 Z" fill="#9a9a9a"/></svg>
<svg width="0" height="0" style="position:absolute"><defs><linearGradient id="gNav" x1="0" y1="0" x2="0" y2="1"><stop offset="0" stop-color="#fdfdfd"/><stop offset="1" stop-color="#ececec"/></linearGradient></defs></svg>
<svg style="left:414px;top:651px" width="25" height="22" viewBox="0 0 25 22" ><rect x="0.7" y="1" width="4.3" height="19" rx="1" fill="#f8f8f8" stroke="#8c8c8c" stroke-width="1.2"/><path d="M5.5 10.5 L14.5 1.4 V5.2 H20.5 L23.5 8.2 V15.5 H14.5 V19.8 Z" fill="url(#gNav)" stroke="#8c8c8c" stroke-width="1.2" stroke-linejoin="round"/><path d="M19.5 6 V8.6 H22.5" fill="none" stroke="#9a9a9a" stroke-width="0.9"/></svg>
<svg style="left:441.5px;top:651px" width="25" height="22" viewBox="0 0 25 22" ><path d="M0.7 10.5 L9.7 1.4 V5.2 H20.7 L23.7 8.2 V15.5 H9.7 V19.8 Z" fill="url(#gNav)" stroke="#8c8c8c" stroke-width="1.2" stroke-linejoin="round"/><path d="M19.7 6 V8.6 H22.7" fill="none" stroke="#9a9a9a" stroke-width="0.9"/></svg>
<div class="r" style="left:469px;top:650px;width:90px;height:23px;background:linear-gradient(#fdfdfd,#f7f7f7);border:1px solid #a2a2a2;border-radius:3px;box-sizing:border-box"></div>
<div class="t" style="left:520.7px;top:654.39px;font-size:12.5px;line-height:14.36px;color:#000;transform:scaleX(0.9000);">4</div>
<svg style="left:528px;top:655px" width="6" height="14" viewBox="0 0 6 14" ><path d="M0.7 13.5 L5.3 0.5" stroke="#666" stroke-width="0.9"/></svg>
<div class="t" style="left:535.0px;top:653.85px;font-size:10px;line-height:11.49px;color:#3a3a3a;transform:scaleX(0.8652);">2920</div>
<svg style="left:561.5px;top:651px" width="25" height="22" viewBox="0 0 25 22" ><g transform="translate(25,0) scale(-1,1)"><path d="M0.7 10.5 L9.7 1.4 V5.2 H20.7 L23.7 8.2 V15.5 H9.7 V19.8 Z" fill="url(#gNav)" stroke="#8c8c8c" stroke-width="1.2" stroke-linejoin="round"/><path d="M19.7 6 V8.6 H22.7" fill="none" stroke="#9a9a9a" stroke-width="0.9"/></g></svg>
<svg style="left:589px;top:651px" width="25" height="22" viewBox="0 0 25 22" ><g transform="translate(25,0) scale(-1,1)"><rect x="0.7" y="1" width="4.3" height="19" rx="1" fill="#f8f8f8" stroke="#8c8c8c" stroke-width="1.2"/><path d="M5.5 10.5 L14.5 1.4 V5.2 H20.5 L23.5 8.2 V15.5 H14.5 V19.8 Z" fill="url(#gNav)" stroke="#8c8c8c" stroke-width="1.2" stroke-linejoin="round"/><path d="M19.5 6 V8.6 H22.5" fill="none" stroke="#9a9a9a" stroke-width="0.9"/></g></svg>
<div class="r" style="left:619px;top:650px;width:1px;height:25px;background:#c8c8c8"></div>
<svg style="left:624px;top:650px" width="21" height="23" viewBox="0 0 21 23" ><g transform="translate(1,0)"><path d="M0.5 0.5 H13.5 L18.5 5.5 V22.5 H0.5 Z" fill="#fafafa" stroke="#9a9a9a"/>
<path d="M13.5 0.5 V5.5 H18.5" fill="#e0e0e0" stroke="#9a9a9a"/><path d="M3 5 H15" stroke="#b8b8b8" stroke-width="1" stroke-dasharray="3 1"/><path d="M3 7.5 H15" stroke="#b8b8b8" stroke-width="1" stroke-dasharray="3 1"/><path d="M3 10 H15" stroke="#b8b8b8" stroke-width="1" stroke-dasharray="3 1"/><path d="M3 12.5 H15" stroke="#b8b8b8" stroke-width="1" stroke-dasharray="3 1"/><path d="M3 15 H15" stroke="#b8b8b8" stroke-width="1" stroke-dasharray="3 1"/><path d="M3 17.5 H15" stroke="#b8b8b8" stroke-width="1" stroke-dasharray="3 1"/></g><path d="M0.7 15.5 L7 9.3 V12.8 H14.5 V18.2 H7 V21.7 Z" fill="url(#gGreen)" stroke="#4e9a0a" stroke-width="1" stroke-linejoin="round"/></svg>
<svg style="left:653px;top:650px" width="21" height="23" viewBox="0 0 21 23" ><path d="M0.5 0.5 H13.5 L18.5 5.5 V22.5 H0.5 Z" fill="#fafafa" stroke="#9a9a9a"/>
<path d="M13.5 0.5 V5.5 H18.5" fill="#e0e0e0" stroke="#9a9a9a"/><path d="M3 5 H15" stroke="#b8b8b8" stroke-width="1" stroke-dasharray="3 1"/><path d="M3 7.5 H15" stroke="#b8b8b8" stroke-width="1" stroke-dasharray="3 1"/><path d="M3 10 H15" stroke="#b8b8b8" stroke-width="1" stroke-dasharray="3 1"/><path d="M3 12.5 H15" stroke="#b8b8b8" stroke-width="1" stroke-dasharray="3 1"/><path d="M3 15 H15" stroke="#b8b8b8" stroke-width="1" stroke-dasharray="3 1"/><path d="M3 17.5 H15" stroke="#b8b8b8" stroke-width="1" stroke-dasharray="3 1"/><path d="M20.3 15.5 L14 9.3 V12.8 H5.5 V18.2 H14 V21.7 Z" fill="url(#gLGreen)" stroke="#a6d070" stroke-width="1" stroke-linejoin="round"/></svg>
<svg style="left:873px;top:650px" width="8" height="16" viewBox="0 0 8 16" ><rect x="0" y="0" width="8" height="16" fill="url(#pGrip)"/></svg>
<svg style="left:873px;top:668px" width="7" height="7" viewBox="0 0 7 7" ><rect x="0" y="0" width="1" height="7" fill="#8a8a8a"/><path d="M6 0 L2 3.5 L6 7 Z" fill="#9a9a9a"/></svg>
<svg style="left:885px;top:650px" width="19" height="24" viewBox="0 0 19 24" ><path d="M0.5 0.5 H13 L18.5 6 V23.5 H0.5 Z" fill="url(#gPage)" stroke="#a8a8a8"/><path d="M13 0.5 V6 H18.5 Z" fill="#fff" stroke="#a8a8a8"/></svg>
<div class="r" style="left:909px;top:648px;width:28px;height:28px;background:linear-gradient(#fbe9b8,#f6d890);border:1px solid #c8a060;border-radius:3px;box-sizing:border-box"></div>
<svg style="left:913px;top:651px" width="21" height="22" viewBox="0 0 21 22" ><rect x="0.5" y="0.5" width="19" height="8" fill="#fff" stroke="#999"/><path d="M0.5 20.5 V11.5 H14 L19.5 16 V20.5" fill="#fff" stroke="#999"/><path d="M0.5 20.5 H19.5" stroke="#999" stroke-dasharray="1 1"/></svg>
<svg style="left:940px;top:656px" width="11" height="13" viewBox="0 0 11 13" ><path d="M0.5 0.5 H7 L10.5 4 V12.5 H0.5 Z" fill="url(#gPage)" stroke="#a8a8a8"/></svg>
<svg style="left:952px;top:656px" width="11" height="13" viewBox="0 0 11 13" ><path d="M0.5 0.5 H7 L10.5 4 V12.5 H0.5 Z" fill="url(#gPage)" stroke="#a8a8a8"/></svg>
<svg style="left:967px;top:650px" width="11" height="11" viewBox="0 0 11 11" ><path d="M0.5 10.5 V0.5 H10.5 V10.5" fill="#f8f8f8" stroke="#a8a8a8"/><path d="M0.5 10.5 H10.5" stroke="#a8a8a8" stroke-dasharray="1 1"/></svg>
<svg style="left:980px;top:650px" width="11" height="11" viewBox="0 0 11 11" ><path d="M0.5 10.5 V0.5 H10.5 V10.5" fill="#f8f8f8" stroke="#a8a8a8"/><path d="M0.5 10.5 H10.5" stroke="#a8a8a8" stroke-dasharray="1 1"/></svg>
<svg style="left:967px;top:662px" width="11" height="11" viewBox="0 0 11 11" ><path d="M0.5 10.5 V0.5 H7 L10.5 4 V10.5" fill="#f8f8f8" stroke="#a8a8a8"/><path d="M0.5 10.5 H10.5" stroke="#a8a8a8" stroke-dasharray="1 1"/></svg>
<svg style="left:980px;top:662px" width="11" height="11" viewBox="0 0 11 11" ><path d="M0.5 10.5 V0.5 H7 L10.5 4 V10.5" fill="#f8f8f8" stroke="#a8a8a8"/><path d="M0.5 10.5 H10.5" stroke="#a8a8a8" stroke-dasharray="1 1"/></svg>
<svg style="left:996px;top:650px" width="8" height="16" viewBox="0 0 8 16" ><rect x="0" y="0" width="8" height="16" fill="url(#pGrip)"/></svg>
<svg style="left:996px;top:668px" width="7" height="7" viewBox="0 0 7 7" ><rect x="0" y="0" width="1" height="7" fill="#8a8a8a"/><path d="M6 0 L2 3.5 L6 7 Z" fill="#9a9a9a"/></svg>
<svg style="left:1010px;top:654px" width="16" height="16" viewBox="0 0 16 16" ><rect x="0.5" y="0.5" width="15" height="15" fill="#2a1410" stroke="#e01818" stroke-width="1.2"/><path d="M4 12 C6 9 8 6 8 3.5 C8 2 7 2 7 3.5 C7 6 9.5 9 13 10.5 C9.5 10 6 10.5 3.5 12 Z" fill="none" stroke="#fff" stroke-width="1"/></svg>
<svg style="left:1036px;top:660px" width="7" height="4" viewBox="0 0 7 4" ><path d="M0 0 H7 L3.5 3.8 Z" fill="#333"/></svg>
<div class="r" style="left:1045px;top:646px;width:9px;height:31px;background:#b3b3b3"></div>
<svg style="left:1047px;top:648px" width="6" height="5" viewBox="0 0 6 5" ><rect width="6" height="1" fill="#fff"/><path d="M0 1.5 H6 L3 5 Z" fill="#fff"/></svg>
<div class="r" style="left:184px;top:300px;width:747px;height:103px;background:#fff"></div>
<div style="position:absolute;left:0;top:0;width:1089px;height:712px;clip-path:inset(210px 0 80px 0)">
<div class="w" style="left:210.50px;top:202.70px;font-size:20px;transform:scaleX(0.85)">знания</div>
<div class="w" style="left:271.20px;top:202.70px;font-size:20px;transform:scaleX(0.85)">о</div>
<div class="w" style="left:286.63px;top:202.70px;font-size:20px;transform:scaleX(0.85)">компьютере</div>
<div class="w" style="left:387.77px;top:202.70px;font-size:20px;transform:scaleX(0.85)">и</div>
<div class="w" style="left:403.24px;top:202.70px;font-size:20px;transform:scaleX(0.85)">операционной</div>
<div class="w" style="left:522.66px;top:202.70px;font-size:20px;transform:scaleX(0.85)">системе</div>
<div class="w" style="left:593.32px;top:202.70px;font-size:20px;transform:scaleX(0.85)">Windows.</div>
<div class="w" style="left:672.98px;top:202.70px;font-size:20px;transform:scaleX(0.85)">Содержание</div>
<div class="w" style="left:778.30px;top:202.70px;font-size:20px;transform:scaleX(0.85)">настоящего</div>
<div class="w" style="left:876.42px;top:202.70px;font-size:20px;transform:scaleX(0.85)">Руко-</div>
<div class="w" style="left:210.50px;top:226.60px;font-size:20px;transform:scaleX(0.85)">водства</div>
<div class="w" style="left:277.41px;top:226.60px;font-size:20px;transform:scaleX(0.85)">рассчитано</div>
<div class="w" style="left:371.87px;top:226.60px;font-size:20px;transform:scaleX(0.85)">на</div>
<div class="w" style="left:395.20px;top:226.60px;font-size:20px;transform:scaleX(0.85)">то,</div>
<div class="w" style="left:421.46px;top:226.60px;font-size:20px;transform:scaleX(0.85)">что</div>
<div class="w" style="left:451.85px;top:226.60px;font-size:20px;transform:scaleX(0.85)">у</div>
<div class="w" style="left:464.83px;top:226.60px;font-size:20px;transform:scaleX(0.85)">пользователя</div>
<div class="w" style="left:576.99px;top:226.60px;font-size:20px;transform:scaleX(0.85)">уже</div>
<div class="w" style="left:610.98px;top:226.60px;font-size:20px;transform:scaleX(0.85)">имеются</div>
<div class="w" style="left:683.78px;top:226.60px;font-size:20px;transform:scaleX(0.85)">первоначальные</div>
<div class="w" style="left:821.31px;top:226.60px;font-size:20px;transform:scaleX(0.85)">знания</div>
<div class="w" style="left:880.52px;top:226.60px;font-size:20px;transform:scaleX(0.85)">и</div>
<div class="w" style="left:894.50px;top:226.60px;font-size:20px;transform:scaleX(0.85)">на-</div>
<div class="w" style="left:210.50px;top:250.70px;font-size:20px;transform:scaleX(0.85)">выки</div>
<div class="w" style="left:254.86px;top:250.70px;font-size:20px;transform:scaleX(0.85)">работы</div>
<div class="w" style="left:318.77px;top:250.70px;font-size:20px;transform:scaleX(0.85)">с</div>
<div class="w" style="left:333.44px;top:250.70px;font-size:20px;transform:scaleX(0.85)">Windows,</div>
<div class="w" style="left:413.30px;top:250.70px;font-size:20px;transform:scaleX(0.85)">как-то:</div>
<div class="w" style="left:471.62px;top:250.70px;font-size:20px;transform:scaleX(0.85)">работа</div>
<div class="w" style="left:532.58px;top:250.70px;font-size:20px;transform:scaleX(0.85)">с</div>
<div class="w" style="left:547.25px;top:250.70px;font-size:20px;transform:scaleX(0.85)">меню,</div>
<div class="w" style="left:601.44px;top:250.70px;font-size:20px;transform:scaleX(0.85)">окнами,</div>
<div class="w" style="left:669.26px;top:250.70px;font-size:20px;transform:scaleX(0.85)">диалогами,</div>
<div class="w" style="left:765.07px;top:250.70px;font-size:20px;transform:scaleX(0.85)">элементами</div>
<div class="w" style="left:867.69px;top:250.70px;font-size:20px;transform:scaleX(0.85)">управ-</div>
<div class="w" style="left:210.50px;top:274.60px;font-size:20px;transform:scaleX(0.85)">ления,</div>
<div class="w" style="left:268.32px;top:274.60px;font-size:20px;transform:scaleX(0.85)">содержащимися</div>
<div class="w" style="left:403.75px;top:274.60px;font-size:20px;transform:scaleX(0.85)">в</div>
<div class="w" style="left:418.41px;top:274.60px;font-size:20px;transform:scaleX(0.85)">диалогах,</div>
<div class="w" style="left:500.99px;top:274.60px;font-size:20px;transform:scaleX(0.85)">и</div>
<div class="w" style="left:516.11px;top:274.60px;font-size:20px;transform:scaleX(0.85)">т.п.</div>
<div class="w" style="left:210.50px;top:304.80px;font-size:20px;transform:scaleX(0.85)">Опытный</div>
<div class="w" style="left:290.52px;top:304.80px;font-size:20px;transform:scaleX(0.85)">пользователь,</div>
<div class="w" style="left:409.06px;top:304.80px;font-size:20px;transform:scaleX(0.85)">знакомый</div>
<div class="w" style="left:492.67px;top:304.80px;font-size:20px;transform:scaleX(0.85)">с</div>
<div class="w" style="left:507.64px;top:304.80px;font-size:20px;transform:scaleX(0.85)">Windows</div>
<div class="w" style="left:583.08px;top:304.80px;font-size:20px;transform:scaleX(0.85)">и</div>
<div class="w" style="left:599.05px;top:304.80px;font-size:20px;transform:scaleX(0.85)">системами</div>
<div class="w" style="left:691.41px;top:304.80px;font-size:20px;transform:scaleX(0.85)">САПР,</div>
<div class="w" style="left:746.02px;top:304.80px;font-size:20px;transform:scaleX(0.85)">может</div>
<div class="w" style="left:801.51px;top:304.80px;font-size:20px;transform:scaleX(0.85)">не</div>
<div class="w" style="left:826.83px;top:304.80px;font-size:20px;transform:scaleX(0.85)">изучать</div>
<div class="w" style="left:893.50px;top:304.80px;font-size:20px;transform:scaleX(0.85)">Ру-</div>
<div class="w" style="left:210.50px;top:328.50px;font-size:20px;transform:scaleX(0.85)">ководство</div>
<div class="w" style="left:295.73px;top:328.50px;font-size:20px;transform:scaleX(0.85)">с</div>
<div class="w" style="left:309.95px;top:328.50px;font-size:20px;transform:scaleX(0.85)">самого</div>
<div class="w" style="left:370.05px;top:328.50px;font-size:20px;transform:scaleX(0.85)">начала,</div>
<div class="w" style="left:436.67px;top:328.50px;font-size:20px;transform:scaleX(0.85)">а</div>
<div class="w" style="left:451.84px;top:328.50px;font-size:20px;transform:scaleX(0.85)">выбрать</div>
<div class="w" style="left:523.72px;top:328.50px;font-size:20px;transform:scaleX(0.85)">только</div>
<div class="w" style="left:581.98px;top:328.50px;font-size:20px;transform:scaleX(0.85)">те</div>
<div class="w" style="left:604.75px;top:328.50px;font-size:20px;transform:scaleX(0.85)">главы,</div>
<div class="w" style="left:661.66px;top:328.50px;font-size:20px;transform:scaleX(0.85)">в</div>
<div class="w" style="left:676.40px;top:328.50px;font-size:20px;transform:scaleX(0.85)">которых</div>
<div class="w" style="left:746.06px;top:328.50px;font-size:20px;transform:scaleX(0.85)">содержится</div>
<div class="w" style="left:844.55px;top:328.50px;font-size:20px;transform:scaleX(0.85)">описание</div>
<div class="w" style="left:210.50px;top:352.20px;font-size:20px;transform:scaleX(0.85)">интересующей</div>
<div class="w" style="left:338.19px;top:352.20px;font-size:20px;transform:scaleX(0.85)">его</div>
<div class="w" style="left:373.28px;top:352.20px;font-size:20px;transform:scaleX(0.85)">возможности</div>
<div class="w" style="left:486.48px;top:352.20px;font-size:20px;transform:scaleX(0.85)">или</div>
<div class="w" style="left:525.74px;top:352.20px;font-size:20px;transform:scaleX(0.85)">конкретных</div>
<div class="w" style="left:626.23px;top:352.20px;font-size:20px;transform:scaleX(0.85)">особенностей</div>
<div class="w" style="left:746.46px;top:352.20px;font-size:20px;transform:scaleX(0.85)">выполнения</div>
<div class="w" style="left:853.20px;top:352.20px;font-size:20px;transform:scaleX(0.85)">той</div>
<div class="w" style="left:890.09px;top:352.20px;font-size:20px;transform:scaleX(0.85)">или</div>
<div class="w" style="left:210.50px;top:375.90px;font-size:20px;transform:scaleX(0.85)">иной</div>
<div class="w" style="left:253.97px;top:375.90px;font-size:20px;transform:scaleX(0.85)">операции.</div>
<div class="t" style="left:211.4px;top:424.63px;font-size:23.5px;line-height:27.00px;font-weight:bold;color:#111;transform:scaleX(0.9012);-webkit-text-stroke:0.3px #111;">Условности и сокращения</div>
<div class="w" style="left:210.50px;top:458.00px;font-size:20px;transform:scaleX(0.85)">В</div>
<div class="w" style="left:227.61px;top:458.00px;font-size:20px;transform:scaleX(0.85)">целях</div>
<div class="w" style="left:279.45px;top:458.00px;font-size:20px;transform:scaleX(0.85)">сокращения</div>
<div class="w" style="left:381.05px;top:458.00px;font-size:20px;transform:scaleX(0.85)">текста</div>
<div class="w" style="left:437.05px;top:458.00px;font-size:20px;transform:scaleX(0.85)">для</div>
<div class="w" style="left:471.87px;top:458.00px;font-size:20px;transform:scaleX(0.85)">описания</div>
<div class="w" style="left:551.84px;top:458.00px;font-size:20px;transform:scaleX(0.85)">выбора</div>
<div class="w" style="left:616.96px;top:458.00px;font-size:20px;transform:scaleX(0.85)">команд</div>
<div class="w" style="left:680.26px;top:458.00px;font-size:20px;transform:scaleX(0.85)">из</div>
<div class="w" style="left:703.32px;top:458.00px;font-size:20px;transform:scaleX(0.85)">меню</div>
<div class="w" style="left:752.37px;top:458.00px;font-size:20px;transform:scaleX(0.85)">использована</div>
<div class="w" style="left:867.42px;top:458.00px;font-size:20px;transform:scaleX(0.85)">следу-</div>
<div class="w" style="left:210.50px;top:481.80px;font-size:20px;transform:scaleX(0.85)">ющая</div>
<div class="w" style="left:261.30px;top:481.80px;font-size:20px;transform:scaleX(0.85)">схема:</div>
<div class="w b" style="left:318.85px;top:482.70px;font-size:19px;transform:scaleX(0.963)">Название</div>
<div class="w b" style="left:410.62px;top:482.70px;font-size:19px;transform:scaleX(0.963)">пункта</div>
<div class="w b" style="left:476.59px;top:482.70px;font-size:19px;transform:scaleX(0.963)">Главного</div>
<div class="w b" style="left:565.27px;top:482.70px;font-size:19px;transform:scaleX(0.963)">меню</div>
<div class="w b" style="left:621.05px;top:482.70px;font-size:19px;transform:scaleX(0.7631578947368421)">—</div>
<div class="w b" style="left:640.96px;top:482.70px;font-size:19px;transform:scaleX(0.963)">Название</div>
<div class="w b" style="left:732.72px;top:482.70px;font-size:19px;transform:scaleX(0.963)">группы</div>
<div class="w b" style="left:804.56px;top:482.70px;font-size:19px;transform:scaleX(0.963)">команд</div>
<div class="w" style="left:875.97px;top:481.80px;font-size:20px;transform:scaleX(0.85)">(если</div>
<div class="w" style="left:210.50px;top:505.50px;font-size:20px;transform:scaleX(0.85)">есть)</div>
<div class="w b" style="left:255.48px;top:506.41px;font-size:19px;transform:scaleX(0.7631578947368421)">—</div>
<div class="w b" style="left:275.07px;top:506.41px;font-size:19px;transform:scaleX(0.963)">Название</div>
<div class="w b" style="left:366.51px;top:506.41px;font-size:19px;transform:scaleX(0.963)">команды</div>
<div class="w" style="left:448.12px;top:505.50px;font-size:20px;transform:scaleX(0.85)">.</div>
<div class="w" style="left:210.50px;top:536.50px;font-size:20px;transform:scaleX(0.85)">Например,</div>
<div class="w" style="left:305.89px;top:536.50px;font-size:20px;transform:scaleX(0.85)">если</div>
<div class="w" style="left:353.44px;top:536.50px;font-size:20px;transform:scaleX(0.85)">в</div>
<div class="w" style="left:372.65px;top:536.50px;font-size:20px;transform:scaleX(0.85)">описании</div>
<div class="w" style="left:457.32px;top:536.50px;font-size:20px;transform:scaleX(0.85)">команды</div>
<div class="w" style="left:537.25px;top:536.50px;font-size:20px;transform:scaleX(0.85)">написано</div>
<div class="w" style="left:621.78px;top:536.50px;font-size:20px;transform:scaleX(0.85)">«...вызовите</div>
<div class="w" style="left:729.49px;top:536.50px;font-size:20px;transform:scaleX(0.85)">команду</div>
<div class="w b" style="left:805.70px;top:537.40px;font-size:19px;transform:scaleX(0.963)">Выделить</div>
<div class="w b" style="left:904.50px;top:537.40px;font-size:19px;transform:scaleX(0.7631578947368421)">—</div>
<div class="w b" style="left:210.50px;top:561.20px;font-size:19px;transform:scaleX(0.963)">Слой</div>
<div class="w b" style="left:262.87px;top:561.20px;font-size:19px;transform:scaleX(0.7631578947368421)">—</div>
<div class="w b" style="left:282.73px;top:561.20px;font-size:19px;transform:scaleX(0.963)">Указанием</div>
<div class="w" style="left:377.76px;top:560.30px;font-size:20px;transform:scaleX(0.85)">...»,</div>
<div class="w" style="left:411.48px;top:560.30px;font-size:20px;transform:scaleX(0.85)">это</div>
<div class="w" style="left:442.19px;top:560.30px;font-size:20px;transform:scaleX(0.85)">означает,</div>
<div class="w" style="left:520.92px;top:560.30px;font-size:20px;transform:scaleX(0.85)">что</div>
<div class="w" style="left:552.19px;top:560.30px;font-size:20px;transform:scaleX(0.85)">необходимо</div>
<div class="w" style="left:652.98px;top:560.30px;font-size:20px;transform:scaleX(0.85)">выполнить</div>
<div class="w" style="left:743.32px;top:560.30px;font-size:20px;transform:scaleX(0.85)">такую</div>
<div class="w" style="left:794.59px;top:560.30px;font-size:20px;transform:scaleX(0.85)">последователь-</div>
<div class="w" style="left:210.50px;top:584.00px;font-size:20px;transform:scaleX(0.85)">ность</div>
<div class="w" style="left:260.12px;top:584.00px;font-size:20px;transform:scaleX(0.85)">действий.</div>
<div class="clip" style="left:40px;top:612px;width:1000px;height:20px;position:absolute">
<div class="w" style="left:170.50px;top:8.50px;font-size:20px;transform:scaleX(0.85)">Выбрать</div>
<div class="w" style="left:244.61px;top:8.50px;font-size:20px;transform:scaleX(0.85)">в</div>
<div class="w" style="left:259.27px;top:8.50px;font-size:20px;transform:scaleX(0.85)">Главном</div>
<div class="w" style="left:332.08px;top:8.50px;font-size:20px;transform:scaleX(0.85)">меню</div>
<div class="w" style="left:381.00px;top:8.50px;font-size:20px;transform:scaleX(0.85)">пункт</div>
<div class="w b" style="left:429.12px;top:9.41px;font-size:19px;transform:scaleX(0.963)">Выделить.</div>
<div class="w" style="left:146.5px;top:8.50px;font-size:20px;transform:scaleX(0.85)">1.</div>
</div>
</div>
<div class="r" style="left:40px;top:210px;width:1000px;height:7px;background:linear-gradient(rgba(0,0,0,.3),rgba(0,0,0,0))"></div>
<div class="r" style="left:181px;top:297px;width:753px;height:109px;border:3.4px solid #ff0000;border-radius:10px;box-sizing:border-box;box-shadow:0 0 0 1.2px #fff,1px 2px 3px 1.5px rgba(0,0,0,.4),inset 0 0 0 1px #fff,inset 1px 2px 5px 2px rgba(0,0,0,.35)"></div>
</body></html>
